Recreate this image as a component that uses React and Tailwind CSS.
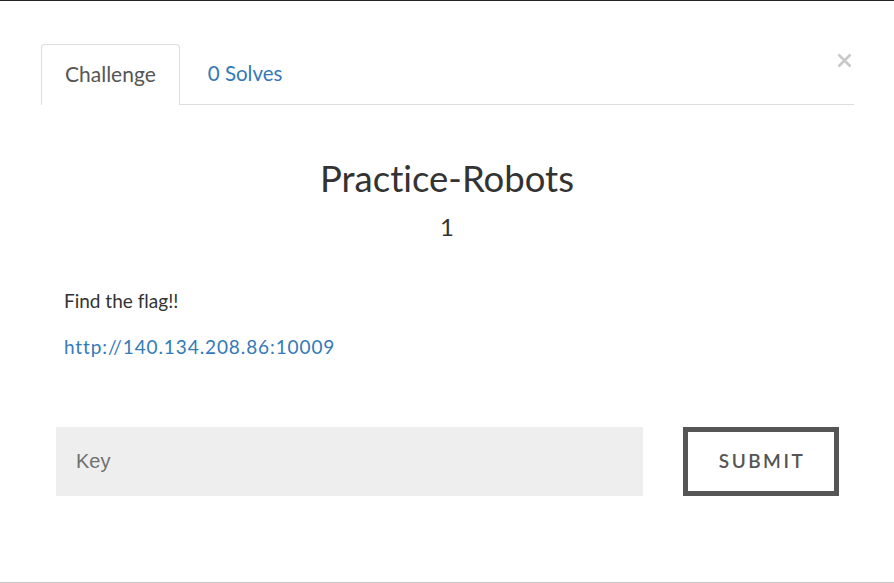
export default function App() {
  const lato = { fontFamily: 'Lato, "Noto Sans", sans-serif' };
  return (
    <div
      className="w-[894px] h-[583px] bg-white border-t border-t-[#222] border-b border-b-[#c6c6c6] relative overflow-hidden text-[#333] [font-variant-ligatures:none]"
      style={lato}
    >
      {/* close button */}
      <button className="absolute left-[837px] top-[52px] w-[15px] h-[15px]">
        <svg viewBox="0 0 15 15" className="w-[15px] h-[15px]">
          <path d="M1.5 1.5 L13.5 13.5 M13.5 1.5 L1.5 13.5" stroke="#c9c9c9" strokeWidth="2.6" />
        </svg>
      </button>

      {/* tabs */}
      <div className="mt-[43px] ml-[41px] mr-[40px] flex border-b border-[#ddd] h-[61px]">
        <div className="px-[23px] border border-[#ddd] border-b-0 rounded-t-[4px] bg-white flex items-center text-[21px] text-[#555] h-[61px] -mb-px pb-[2px]">
          Challenge
        </div>
        <div className="ml-[4px] px-[24px] flex items-center text-[20.5px] text-[#337ab7] pb-[2px]">
          0 Solves
        </div>
      </div>

      {/* title */}
      <div className="text-center mt-[53px]">
        <h2 className="text-[36.5px] leading-[40px] text-[#333]">Practice-Robots</h2>
        <h3 className="text-[24px] leading-[30px] mt-[14px] text-[#333]">1</h3>
      </div>

      {/* description */}
      <div className="ml-[64px] mt-[46px] text-[19px]">
        <p className="leading-[26px]">Find the flag!!</p>
        <p className="leading-[26px] mt-[20px]">
          <a className="text-[#337ab7] tracking-[0.9px]">http://140.134.208.86:10009</a>
        </p>
      </div>

      {/* key form */}
      <div className="flex ml-[56px] mt-[67px] gap-[40px]">
        <input
          placeholder="Key"
          className="w-[587px] h-[69px] bg-[#eee] px-[20px] text-[20px] text-[#666] placeholder-[#707070] outline-none"
          style={{ fontFamily: '"Liberation Sans", Arial, sans-serif' }}
        />
        <button className="w-[156px] h-[69px] border-[5px] border-[#555] text-[#555] text-[19px] font-semibold tracking-[2.5px] uppercase pl-[2px]">
          Submit
        </button>
      </div>
    </div>
  );
}
